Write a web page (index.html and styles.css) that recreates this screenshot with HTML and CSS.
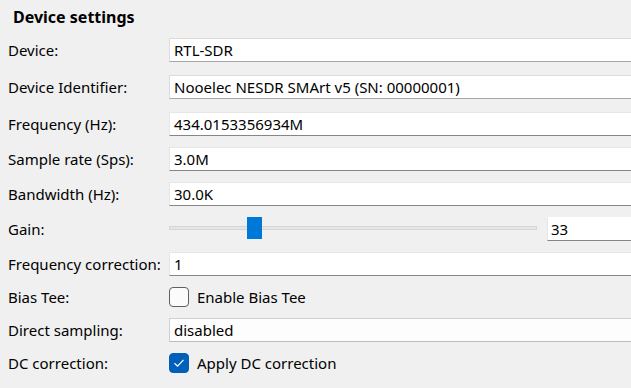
FILE: index.html
```html
<!DOCTYPE html>
<html lang="en">
<head>
    <meta charset="UTF-8">
    <title>Device settings</title>
    <link rel="stylesheet" href="styles.css">
</head>
<body>
    <div class="panel">
        <h1 class="title">Device settings</h1>

        <div class="row combo-row">
            <span class="label">Device:</span>
            <div class="field combo">RTL-SDR</div>
        </div>

        <div class="row combo-row">
            <span class="label">Device Identifier:</span>
            <div class="field combo">Nooelec NESDR SMArt v5 (SN: 00000001)</div>
        </div>

        <div class="row">
            <span class="label">Frequency (Hz):</span>
            <div class="field">434.0153356934M</div>
        </div>

        <div class="row">
            <span class="label">Sample rate (Sps):</span>
            <div class="field">3.0M</div>
        </div>

        <div class="row">
            <span class="label">Bandwidth (Hz):</span>
            <div class="field">30.0K</div>
        </div>

        <div class="row">
            <span class="label">Gain:</span>
            <div class="gain">
                <div class="slider">
                    <div class="groove"></div>
                    <div class="handle" style="left: 78px"></div>
                </div>
                <div class="field spin">33</div>
            </div>
        </div>

        <div class="row">
            <span class="label">Frequency correction:</span>
            <div class="field">1</div>
        </div>

        <div class="row check-row">
            <span class="label">Bias Tee:</span>
            <label class="check">
                <span class="box"></span>
                Enable Bias Tee
            </label>
        </div>

        <div class="row">
            <span class="label">Direct sampling:</span>
            <div class="field combo light">disabled</div>
        </div>

        <div class="row check-row">
            <span class="label">DC correction:</span>
            <label class="check">
                <span class="box checked">
                    <svg width="12" height="10" viewBox="0 0 12 10">
                        <path d="M1.5 5.2 L4.6 8.2 L10.5 1.8" fill="none" stroke="#fff" stroke-width="1.2"/>
                    </svg>
                </span>
                Apply DC correction
            </label>
        </div>
    </div>
</body>
</html>
```

FILE: styles.css
```css
body {
    margin: 0;
    padding: 0;
    background-color: #f0f0f0;
    font-family: "Noto Sans", sans-serif;
    font-size: 15px;
    color: #000;
    overflow: hidden;
}

.panel {
    display: flex;
    flex-direction: column;
    gap: 11px;
    padding: 7px 0 0 8px;
}

.title {
    margin: 0 0 0 5px;
    font-size: 16px;
    font-weight: bold;
    line-height: 20px;
}

.row {
    display: flex;
    align-items: center;
    height: 24px;
}

.combo-row {
    margin-bottom: 2px;
}

.check-row {
    height: 20px;
}

.label {
    width: 161px;
    flex: none;
    white-space: nowrap;
}

.field {
    flex: 1;
    box-sizing: border-box;
    height: 24px;
    line-height: 22px;
    padding-left: 4px;
    background: #fff;
    border: 1px solid #e6e6e6;
    border-bottom-color: #868686;
    border-right: none;
    white-space: nowrap;
}

.combo {
    border-color: #dcdcdc;
    border-bottom-color: #a8a8a8;
}

.combo.light {
    background: #fdfdfd;
    border-color: #d0d0d0;
    border-bottom-color: #bdbdbd;
}

.gain {
    flex: 1;
    display: flex;
    align-items: center;
    gap: 10px;
}

.slider {
    position: relative;
    width: 368px;
    height: 24px;
    flex: none;
}

.groove {
    margin-top: 9px;
    height: 2px;
    background: #e6e6e6;
    border: 1px solid #d6d6d6;
}

.handle {
    position: absolute;
    top: 0;
    width: 15px;
    height: 22px;
    background: #0078d7;
}

.spin {
    padding-left: 3px;
    border-top-color: #fff;
}

.check {
    display: flex;
    align-items: center;
    gap: 8px;
}

.box {
    box-sizing: border-box;
    width: 20px;
    height: 20px;
    border: 1px solid #5f5f5f;
    border-radius: 4px;
    background: #fbfbfb;
    display: flex;
    align-items: center;
    justify-content: center;
}

.box.checked {
    background: #005fb8;
    border-color: #005fb8;
}
```
